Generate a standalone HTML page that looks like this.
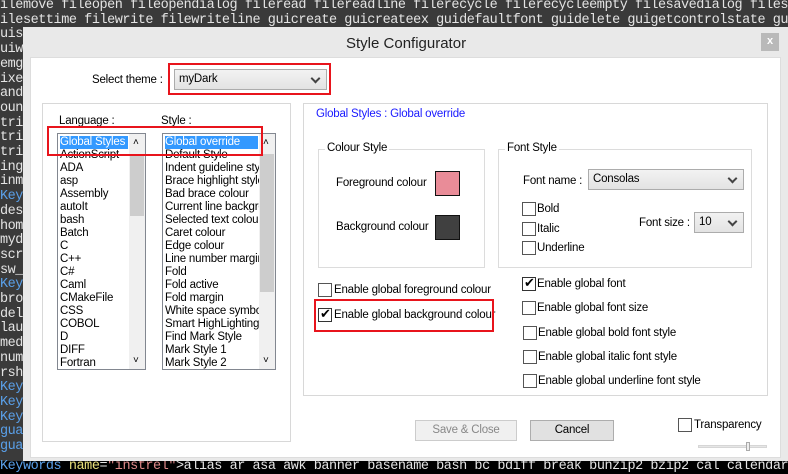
<!DOCTYPE html>
<html><head><meta charset="utf-8"><style>
*{margin:0;padding:0;box-sizing:border-box}
body{width:788px;height:474px;overflow:hidden;background:#3a3a3a;position:relative;font-family:"Liberation Sans",sans-serif;font-size:11.5px;letter-spacing:-0.2px;color:#000}
.code{position:absolute;left:0;width:788px;overflow:hidden;font-family:"Liberation Mono",monospace;font-size:13.5px;color:#e4e4e4;white-space:pre;line-height:14.7px;letter-spacing:-0.45px}
.b{color:#5aa0ea}
.a{position:absolute}
.dlg{position:absolute;left:23px;top:27px;width:765px;height:434px;background:#e9e9e9}
.in{position:absolute;left:30px;top:57px;width:751px;height:401px;background:#fff;border:1px solid #ddd}
.grp{position:absolute;border:1px solid #d8d8d8}
.gb{position:absolute;border:1px solid #dcdcdc}
.gb span{position:absolute;top:-8px;left:6px;background:#fff;padding:0 2px}
.dd{position:absolute;background:linear-gradient(#f2f2f2,#e3e3e3);border:1px solid #acacac;padding:3px 4px;font-size:11.5px}
.dd:after{content:"";position:absolute;right:7px;top:5px;width:5px;height:5px;border-right:2px solid #444;border-bottom:2px solid #444;transform:rotate(45deg)}
.red{position:absolute;border:2px solid #e8141c}
.list{position:absolute;border:1px solid #828790;background:#fff;overflow:hidden;line-height:13px;font-size:11.5px;padding:2px 2px;white-space:nowrap}
.sb{position:absolute;top:0;right:0;width:16px;height:100%;background:#f0f0f0}
.th{position:absolute;left:1px;width:14px;background:#cdcdcd}
.cb{position:absolute;width:14px;height:14px;border:1px solid #333;background:#fff}
.ck:after{content:"✔";position:absolute;left:1px;top:-3px;font-size:13px}
.lbl{position:absolute;white-space:nowrap;margin-top:1px}
.btn{position:absolute;border:1px solid #adadad;background:#e1e1e1;text-align:center;line-height:19px}
</style></head><body>
<div class="code" style="top:-1px">ilemove fileopen fileopendialog fileread filereadline filerecycle filerecycleempty filesavedialog fileselectfolder
ilesettime filewrite filewriteline guicreate guicreateex guidefaultfont guidelete guigetcontrolstate guihide guim
uise
uiwa
emgo
ixel
ando
ound
trin
trin
trin
inge
inmx
<span class="b">Keyw</span>
desk
home
mydo
scri
sw_
<span class="b">Keyw</span>
brow
dele
laun
medi
nump
rsh:
<span class="b">Keyw</span>
<span class="b">Keyw</span>
<span class="b">Keyw</span>
<span class="b">guag</span>
<span class="b">guag</span></div>
<div class="a" style="left:0;top:461px;width:788px;height:13px;background:#000"></div>
<div class="code" style="top:459px;line-height:15px"><span class="b">Keywords</span> <span style="color:#e8e07a">name</span>=<span style="color:#e08a8a">"instrel"</span>&gt;alias ar asa awk banner basename bash bc bdiff break bunzip2 bzip2 cal calendar case cat</div>

<div class="dlg"></div>
<div class="lbl" style="left:346px;top:34px;font-size:15px;color:#222;letter-spacing:0">Style Configurator</div>
<div class="a" style="left:761px;top:33px;width:18px;height:18px;background:#b9b9b9;color:#fff;text-align:center;font-size:11px;line-height:17px;font-weight:bold">x</div>
<div class="in"></div>

<div class="lbl" style="left:92px;top:73px">Select theme :</div>
<div class="dd" style="left:174px;top:69px;width:153px;height:21px">myDark</div>
<div class="red" style="left:168px;top:63px;width:163px;height:32px"></div>

<div class="grp" style="left:42px;top:103px;width:249px;height:339px"></div>
<div class="lbl" style="left:59px;top:114px">Language :</div>
<div class="lbl" style="left:161px;top:114px">Style :</div>
<div class="list" style="left:57px;top:133px;width:89px;height:237px">
<div style="background:#3399ff;color:#fff;width:68px">Global Styles</div>ActionScript<br>ADA<br>asp<br>Assembly<br>autoIt<br>bash<br>Batch<br>C<br>C++<br>C#<br>Caml<br>CMakeFile<br>CSS<br>COBOL<br>D<br>DIFF<br>Fortran
<div class="sb"><div class="th" style="top:20px;height:62px"></div><div style="position:absolute;left:4px;top:2px;font-size:10px">˄</div><div style="position:absolute;left:4px;bottom:2px;font-size:10px">˅</div></div></div>
<div class="list" style="left:162px;top:133px;width:114px;height:237px">
<div style="background:#3399ff;color:#fff;width:93px">Global override</div>Default Style<br>Indent guideline style<br>Brace highlight style<br>Bad brace colour<br>Current line background<br>Selected text colour<br>Caret colour<br>Edge colour<br>Line number margin<br>Fold<br>Fold active<br>Fold margin<br>White space symbol<br>Smart HighLighting<br>Find Mark Style<br>Mark Style 1<br>Mark Style 2
<div class="sb"><div class="th" style="top:20px;height:138px"></div><div style="position:absolute;left:4px;top:2px;font-size:10px">˄</div><div style="position:absolute;left:4px;bottom:2px;font-size:10px">˅</div></div></div>
<div class="red" style="left:47px;top:126px;width:216px;height:30px"></div>

<div class="grp" style="left:303px;top:103px;width:465px;height:293px"></div>
<div class="lbl" style="left:316px;top:107px;color:#1a1aff">Global Styles : Global override</div>

<div class="gb" style="left:318px;top:149px;width:167px;height:119px"><span>Colour Style</span></div>
<div class="lbl" style="left:336px;top:176px">Foreground colour</div>
<div class="a" style="left:435px;top:171px;width:25px;height:25px;background:#e98c98;border:1px solid #111"></div>
<div class="lbl" style="left:336px;top:220px">Background colour</div>
<div class="a" style="left:435px;top:215px;width:25px;height:25px;background:#404040;border:1px solid #111"></div>

<div class="gb" style="left:498px;top:149px;width:254px;height:119px"><span>Font Style</span></div>
<div class="lbl" style="left:523px;top:174px">Font name :</div>
<div class="dd" style="left:588px;top:169px;width:156px;height:21px">Consolas</div>
<div class="cb" style="left:522px;top:202px;border-color:#555"></div><div class="lbl" style="left:537px;top:202px">Bold</div>
<div class="cb" style="left:522px;top:222px;border-color:#555"></div><div class="lbl" style="left:537px;top:222px">Italic</div>
<div class="cb" style="left:522px;top:241px;border-color:#555"></div><div class="lbl" style="left:537px;top:241px">Underline</div>
<div class="lbl" style="left:639px;top:216px">Font size :</div>
<div class="dd" style="left:694px;top:212px;width:50px;height:21px">10</div>

<div class="cb" style="left:318px;top:283px;border-color:#555"></div><div class="lbl" style="left:334px;top:283px">Enable global foreground colour</div>
<div class="cb ck" style="left:318px;top:308px"></div><div class="lbl" style="left:334px;top:308px">Enable global background colour</div>
<div class="red" style="left:314px;top:299px;width:180px;height:33px"></div>

<div class="cb ck" style="left:522px;top:277px"></div><div class="lbl" style="left:537px;top:277px">Enable global font</div>
<div class="cb" style="left:522px;top:301px;border-color:#555"></div><div class="lbl" style="left:537px;top:301px">Enable global font size</div>
<div class="cb" style="left:523px;top:326px;border-color:#555"></div><div class="lbl" style="left:538px;top:326px">Enable global bold font style</div>
<div class="cb" style="left:523px;top:350px;border-color:#555"></div><div class="lbl" style="left:538px;top:350px">Enable global italic font style</div>
<div class="cb" style="left:523px;top:374px;border-color:#555"></div><div class="lbl" style="left:538px;top:374px">Enable global underline font style</div>

<div class="btn" style="left:415px;top:420px;width:102px;height:21px;color:#888;background:#f0f0f0;border-color:#ccc">Save &amp; Close</div>
<div class="btn" style="left:530px;top:420px;width:84px;height:21px">Cancel</div>
<div class="cb" style="left:678px;top:418px;border-color:#555"></div><div class="lbl" style="left:694px;top:418px">Transparency</div>
<div class="a" style="left:698px;top:445px;width:69px;height:3px;background:#e6e6e6;border:1px solid #d6d6d6"></div>
<div class="a" style="left:746px;top:442px;width:4px;height:9px;background:#eee;border:1px solid #aaa"></div>
</body></html>
